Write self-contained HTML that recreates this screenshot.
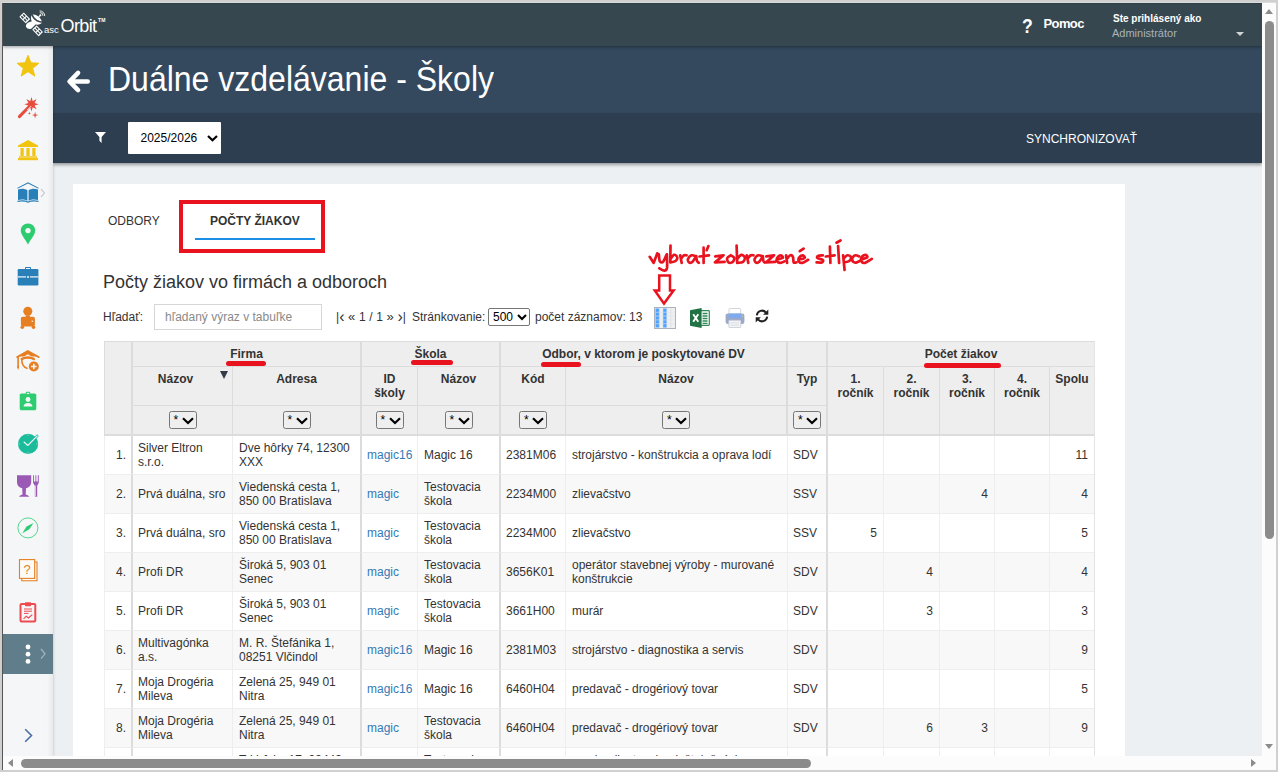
<!DOCTYPE html>
<html lang="sk">
<head>
<meta charset="utf-8">
<title>Duálne vzdelávanie - Školy</title>
<style>
*{box-sizing:border-box;}
html,body{margin:0;padding:0;width:1278px;height:772px;overflow:hidden;background:#d0d0d0;font-family:"Liberation Sans",sans-serif;}
#frame{position:absolute;left:0;top:0;width:1278px;height:772px;background:#d0d0d0;overflow:hidden;}
#darkl{position:absolute;left:2px;top:3px;width:1px;height:767px;background:#555;}
#view{position:absolute;left:3px;top:3px;width:1259px;height:753px;background:#ecf0f3;overflow:hidden;}
#vsb{position:absolute;left:1262px;top:3px;width:14px;height:767px;background:#fcfcfc;}
#hsb{position:absolute;left:3px;top:756px;width:1259px;height:14px;background:#fcfcfc;}
.thumb{position:absolute;background:#8b8b8b;border-radius:5px;}
.tri{position:absolute;width:0;height:0;}
/* coordinates inside #view are page coords minus 3 */
#topbar{position:absolute;left:0;top:0;width:1259px;height:43px;background:#37474f;border-top:1px solid #2e3f48;box-shadow:0 1px 3px rgba(0,0,0,.36);z-index:5;}
#sidebar{position:absolute;left:0;top:43px;width:50px;height:710px;background:linear-gradient(to right,#f5f6f8 0,#f5f6f8 44px,#ebecee 49px,#e6e7e9 50px);box-shadow:1px 0 2px rgba(0,0,0,.12);z-index:3;}
#titlebar{position:absolute;left:50px;top:43px;width:1209px;height:67px;background:#34495e;}
#filterbar{position:absolute;left:50px;top:110px;width:1209px;height:50px;background:#2c3e50;box-shadow:0 2px 3px rgba(0,0,0,.35);z-index:2;}
#panel{position:absolute;left:70px;top:181px;width:1052px;height:600px;background:#fff;}
.abs{position:absolute;white-space:nowrap;}
.ic{z-index:4;}
table.g{position:absolute;left:101px;top:338px;width:990px;border-collapse:separate;border-spacing:0;table-layout:fixed;font-size:12px;color:#333;border-right:1px solid #e4e4e4;}
table.g td,table.g th{border:0;border-left:1px solid #eee;border-bottom:1px solid #eee;padding:0;overflow:hidden;}
table.g th{background:#eeeeee;font-weight:bold;color:#333;text-align:center;vertical-align:top;line-height:14px;border-color:#dcdcdc;}
table.g tr.h1 th{border-top:1px solid #dcdcdc;}
table.g tr.h3 th,table.g th.hb{border-bottom:2px solid #dcdcdc;}
table.g td{height:39px;line-height:14px;padding:0 4px 1px 6px;vertical-align:middle;}
table.g tr.o td{background:#fff;}
table.g tr.e td{background:#f8f8f8;}
table.g th.bl,table.g td.bl{border-left:2px solid #dcdcdc;padding-left:5px;}
table.g th.bl{padding-left:0;}
table.g td.ty{border-left:0;position:relative;padding-left:7px;}
table.g td.ty::before{content:'';position:absolute;left:1px;top:0;bottom:0;width:1px;background:#eee;}
table.g td.n{text-align:right;padding-right:6px;}
table.g td.c0{text-align:right;padding:0 5px 1px 0;}
table.g a{color:#337ab7;text-decoration:none;}
.sel{display:inline-block;width:28px;height:18px;border:1px solid #767676;border-radius:2.500px;background:#efefef;position:relative;vertical-align:top;margin-top:5px;}
.sel i{position:absolute;left:4px;top:1px;font-style:normal;font-weight:normal;font-size:12px;line-height:14px;color:#000;}
.sel svg{position:absolute;left:12.200px;top:4.800px;}
.ul{position:absolute;height:5px;border-radius:2.500px;background:#e8131f;z-index:2;}
</style>
</head>
<body>
<div id="frame">
<div id="darkl"></div>
<div style="position:absolute;left:3px;top:2px;width:1273px;height:1px;background:#dcdcdc;"></div>
<div id="view">

<div id="topbar">
  <svg class="abs" style="left:15px;top:5.500px" width="28" height="28" viewBox="0 0 28 28">
    <g fill="#fff">
      <g transform="translate(6.75,7.95) rotate(45.4)"><rect x="-4.630" y="-3.080" width="9.260" height="6.160" rx=".5" fill="#fff"/><rect x="-3.53" y="-2.03" width="2.900" height="1.500" fill="#37474f"/><rect x="-3.53" y="0.52" width="2.900" height="1.500" fill="#37474f"/><rect x="0.42" y="-2.03" width="2.900" height="1.500" fill="#37474f"/><rect x="0.42" y="0.52" width="2.900" height="1.500" fill="#37474f"/></g>
      <g transform="translate(19.65,20.85) rotate(45.4)"><rect x="-4.630" y="-3.080" width="9.260" height="6.160" rx=".5" fill="#fff"/><rect x="-3.53" y="-2.03" width="2.900" height="1.500" fill="#37474f"/><rect x="-3.53" y="0.52" width="2.900" height="1.500" fill="#37474f"/><rect x="0.42" y="-2.03" width="2.900" height="1.500" fill="#37474f"/><rect x="0.42" y="0.52" width="2.900" height="1.500" fill="#37474f"/></g>
      <path d="M8.500 17.600C7 15.600 8.600 12.800 11.200 12.200L15.600 10.500L17.800 14.200L14.500 17.500C13 19.500 10 19.600 8.500 17.600z"/>
      <path d="M13.600 5.200C12.200 8.400 13.400 12.200 16.400 14C19.400 15.600 22.600 14.600 24 12.600C20 13 14.800 9.600 13.600 5.200z"/>
      <path d="M14.800 4.600C17.800 4 22.600 7.200 23.800 11.400C20.600 11.600 15.600 8.400 14.800 4.600z" fill="#fff"/>
    </g>
    <g stroke="#37474f" stroke-width=".8" fill="none">
      <path d="M14.600 5C16 8.800 20 11.600 23.800 11.800" stroke-width=".7"/>
    </g>
    <path d="M19 9L22.300 5.300" stroke="#fff" stroke-width="1.100"/>
    <circle cx="22.400" cy="5.200" r="1" fill="#fff"/>
    <g stroke="#fff" stroke-width=".9" fill="none" stroke-linecap="round">
      <path d="M22.200 2.600A2.700 2.700 0 0 1 25 5.400"/>
      <path d="M22 .9A4.500 4.500 0 0 1 26.700 5.600"/>
    </g>
  </svg>
  <div class="abs" style="left:41px;top:19.500px;font-size:9.500px;line-height:12px;color:#fff;letter-spacing:0;">asc</div>
  <div class="abs" style="left:57.500px;top:10.700px;font-size:18px;line-height:22px;color:#fff;letter-spacing:-.6px;">Orbit</div>
  <div class="abs" style="left:95px;top:13px;font-size:5px;line-height:6px;color:#fff;font-weight:bold;letter-spacing:.3px;">TM</div>
  <div class="abs" style="left:1019px;top:10.500px;font-size:20px;line-height:22px;font-weight:bold;color:#fff;transform:scaleX(.88);transform-origin:0 0;">?</div>
  <div class="abs" style="left:1040.500px;top:12px;font-size:13px;font-weight:bold;color:#fff;letter-spacing:-.6px;">Pomoc</div>
  <div class="abs" style="left:1110px;top:9px;font-size:10px;font-weight:bold;color:#fff;">Ste prihlásený ako</div>
  <div class="abs" style="left:1109px;top:23px;font-size:11px;color:#a9b4ba;">Administrátor</div>
  <div class="tri" style="left:1233px;top:28px;border-left:4px solid transparent;border-right:4px solid transparent;border-top:4px solid #cfd4d7;"></div>
</div>

<div id="sidebar">
  <div style="position:absolute;left:0;top:588px;width:50px;height:40px;background:#607d8b;"></div>
</div>

<!-- sidebar icons -->
<svg class="abs ic" style="left:13px;top:50.5px" width="24" height="24" viewBox="0 0 24 24"><polygon points="12.00,1.30 14.88,8.84 22.94,9.25 16.66,14.31 18.76,22.10 12.00,17.70 5.24,22.10 7.34,14.31 1.06,9.25 9.12,8.84" fill="#f1c40f" stroke="#f1c40f" stroke-width="1" stroke-linejoin="round"/></svg>
<svg class="abs ic" style="left:13px;top:93px" width="24" height="24" viewBox="0 0 24 24"><polygon points="15.50,1.00 16.76,5.15 20.59,3.11 18.55,6.94 22.70,8.20 18.55,9.46 20.59,13.29 16.76,11.25 15.50,15.40 14.24,11.25 10.41,13.29 12.45,9.46 8.30,8.20 12.45,6.94 10.41,3.11 14.24,5.15" fill="#e74c3c"/><path d="M3.400 20.600L14.500 9.200" stroke="#e74c3c" stroke-width="3" stroke-linecap="round"/><path d="M11.600 13.800L14.900 10.400" stroke="#f5f6f8" stroke-width="1" stroke-linecap="round"/><polygon points="19.10,15.80 19.81,18.39 22.40,19.10 19.81,19.81 19.10,22.40 18.39,19.81 15.80,19.10 18.39,18.39" fill="#e74c3c"/><polygon points="13.40,15.60 13.82,16.88 15.10,17.30 13.82,17.72 13.40,19.00 12.98,17.72 11.70,17.30 12.98,16.88" fill="#e74c3c"/></svg>
<svg class="abs ic" style="left:13px;top:135px" width="24" height="24" viewBox="0 0 24 24"><g fill="#f1c40f"><path d="M12 2L22 7.500V9H2V7.500z"/><rect x="4.500" y="10" width="3.200" height="8"/><rect x="10.400" y="10" width="3.200" height="8"/><rect x="16.300" y="10" width="3.200" height="8"/><rect x="3" y="18.300" width="18" height="1.400"/><rect x="2" y="20" width="20" height="2.200"/></g></svg>
<svg class="abs ic" style="left:13px;top:177px" width="24" height="24" viewBox="0 0 24 24"><g fill="#2980b9"><path d="M12 2.200L22.500 7.800V8.800L12 3.400L1.500 8.800V7.800z"/><path d="M2 9.500C5.500 8.300 8.800 8.600 11.400 10.300V20.800C8.800 19.300 5.500 19 2 20z"/><path d="M22 9.500C18.500 8.300 15.200 8.600 12.600 10.300V20.800C15.200 19.300 18.500 19 22 20z"/><path d="M1.500 20.800C5.500 19.800 8.800 20 12 21.600C15.200 20 18.500 19.800 22.500 20.800V22C18.500 21.100 15.200 21.300 12 22.800C8.800 21.300 5.500 21.100 1.500 22z"/></g></svg>
<svg class="abs ic" style="left:37.2px;top:185.3px" width="6" height="10" viewBox="0 0 6 10"><path d="M1 1L4.500 5L1 9" fill="none" stroke="#c9ced3" stroke-width="1.200"/></svg>
<svg class="abs ic" style="left:13px;top:219px" width="24" height="24" viewBox="0 0 24 24"><path d="M12 1.500C7.800 1.500 4.800 4.600 4.800 8.500C4.800 12.800 9 17 12 22.500C15 17 19.200 12.800 19.200 8.500C19.200 4.600 16.200 1.500 12 1.500z" fill="#2ecc71"/><circle cx="12" cy="8.600" r="2.700" fill="#f5f6f8"/></svg>
<svg class="abs ic" style="left:13px;top:261px" width="24" height="24" viewBox="0 0 24 24"><g fill="#2980b9"><path d="M9 5.500V4C9 3.300 9.400 3 10 3H14C14.600 3 15 3.300 15 4V5.500H14V4H10V5.500z"/><rect x="1.700" y="5" width="20.700" height="16.500" rx="1.200"/></g><rect x="1.700" y="12.300" width="20.700" height="1.200" fill="#f5f6f8"/><circle cx="12" cy="12.900" r="2.100" fill="#2980b9"/><circle cx="12" cy="12.900" r="1" fill="#f5f6f8"/></svg>
<svg class="abs ic" style="left:13px;top:303px" width="24" height="24" viewBox="0 0 24 24"><g fill="#e67e22"><circle cx="11.800" cy="5.300" r="4.500"/><rect x="9.600" y="9.400" width="4.400" height="2"/><rect x="4.900" y="10.700" width="14" height="9.700" rx="1.800"/><circle cx="6.300" cy="21.200" r="1.800"/><circle cx="17.500" cy="21.200" r="1.800"/></g><circle cx="16.300" cy="15.200" r=".8" fill="#f5f6f8"/></svg>
<svg class="abs ic" style="left:13px;top:345.5px" width="24" height="24" viewBox="0 0 24 24"><g fill="none" stroke="#e67e22" stroke-linecap="round" stroke-linejoin="round"><path d="M1.300 8L11.800 2L22.600 8" stroke-width="2"/><path d="M11.800 2.200L21 7.600H2.600z" fill="#e67e22" stroke="none"/><path d="M11.800 5.300L17.600 8.700H6z" fill="#f5f6f8" stroke="none"/><path d="M2.100 8.200V18" stroke-width="1.600"/><path d="M5.800 10C9 7.900 14.600 7.900 17.800 10" stroke-width="2.500"/><path d="M5.800 10.500C5.600 14.500 7.500 18.500 11 19.300" stroke-width="1.500"/></g><path d="M2.100 21L0.900 17.600H3.300z" fill="#e67e22"/><circle cx="17.800" cy="17.500" r="5" fill="#e67e22"/><path d="M17.800 14.700V20.300M15 17.500H20.600" stroke="#f5f6f8" stroke-width="1.600"/></svg>
<svg class="abs ic" style="left:13px;top:386px" width="24" height="24" viewBox="0 0 24 24"><path d="M9.800 4.400V3.600C9.800 3.100 10.200 2.800 10.600 2.800H13.400C13.800 2.800 14.200 3.100 14.200 3.600V4.400H18.500C19.600 4.400 20.300 5.100 20.300 6.200V19.400C20.300 20.500 19.600 21.200 18.500 21.200H5.500C4.400 21.200 3.700 20.500 3.700 19.400V6.200C3.700 5.100 4.400 4.400 5.500 4.400z" fill="#2ecc71"/><rect x="10.800" y="3.800" width="2.400" height="1.300" fill="#f5f6f8"/><circle cx="12" cy="10.500" r="2.400" fill="#f5f6f8"/><path d="M7.600 17.600C7.600 15.300 9.300 14 12 14C14.700 14 16.400 15.300 16.400 17.600z" fill="#f5f6f8"/></svg>
<svg class="abs ic" style="left:13px;top:429px" width="24" height="24" viewBox="0 0 24 24"><circle cx="12.100" cy="11.900" r="10.100" fill="#1abc9c"/><g stroke="#76d7c4" stroke-width="1"><path d="M12.100 2.300V4M12.100 19.800V21.500M2.500 11.900H4.200M20 11.900H21.700"/></g><path d="M8 10L11.800 13.500L21.200 3.900" fill="none" stroke="#1abc9c" stroke-width="2.600" stroke-linecap="round" stroke-linejoin="round"/><path d="M8 10L11.800 13.500L21.200 3.900" fill="none" stroke="#f5f6f8" stroke-width="1.100" stroke-linecap="round" stroke-linejoin="round"/></svg>
<svg class="abs ic" style="left:13px;top:471px" width="24" height="24" viewBox="0 0 24 24"><g fill="#9b59b6"><path d="M1 1.300H15.200V8.500C15.200 11.500 13 13.600 10 14.200L9.700 20.500C10.800 20.800 12.300 21.200 13.200 22.700H3C3.900 21.200 5.400 20.800 6.500 20.500L6.200 14.200C3.200 13.600 1 11.500 1 8.500z"/><path d="M17 1.300H17.900V7.500H19.400V1.300H20.300V7.500H21.800V1.300H22.800V8C22.800 10 21.300 10.800 21.200 12V22.700H18.900V12C18.800 10.800 17 10 17 8z"/></g><rect x="18.900" y="11.500" width="1.100" height="11.200" fill="#d7bde2"/></svg>
<svg class="abs ic" style="left:13px;top:512.7px" width="24" height="24" viewBox="0 0 24 24"><circle cx="11.900" cy="11.900" r="10" fill="none" stroke="#58d68d" stroke-width="1"/><path d="M17.500 7L13.300 13.300L6.300 17.300L10.500 10.600z" fill="#2ecc71"/></svg>
<svg class="abs ic" style="left:13px;top:555px" width="24" height="24" viewBox="0 0 24 24"><g fill="#fdfbf8" stroke="#e67e22" stroke-width="1.100"><path d="M5.800 4H21V22.700H5.800z"/><rect x="3.500" y="1.600" width="15.200" height="18.800"/></g><text x="11.100" y="15.600" font-family="Liberation Sans" font-size="13" fill="#e67e22" text-anchor="middle">?</text></svg>
<svg class="abs ic" style="left:13px;top:596.5px" width="24" height="24" viewBox="0 0 24 24"><rect x="4.500" y="4" width="14.800" height="17.600" rx="1" fill="#f5f6f8" stroke="#ee4b50" stroke-width="2"/><rect x="9" y="2.200" width="6" height="4" rx=".6" fill="#ee4b50"/><g stroke="#ee4b50" stroke-width="1" fill="none"><path d="M8 9H16M8 11.200H16M8 13.400H12.500"/><path d="M7.600 18.800L10.200 16.200L12.500 18L16.300 14.600" stroke-width="1.200"/></g></svg>
<svg class="abs ic" style="left:22px;top:640.5px" width="6" height="21" viewBox="0 0 6 21"><g fill="#fff"><circle cx="3" cy="3" r="2.400"/><circle cx="3" cy="10.200" r="2.400"/><circle cx="3" cy="17.400" r="2.400"/></g></svg>
<svg class="abs ic" style="left:36.5px;top:644.8px" width="7" height="12" viewBox="0 0 7 12"><path d="M1 1L5 5.800L1 10.600" fill="none" stroke="#9fb3bd" stroke-width="1.300"/></svg>
<svg class="abs ic" style="left:21px;top:724.9px" width="9" height="15" viewBox="0 0 9 15"><path d="M1.200 1.200L7.500 7.500L1.200 13.800" fill="none" stroke="#4a6fa5" stroke-width="1.600"/></svg>

<div id="titlebar">
  <svg class="abs" style="left:12px;top:22.500px" width="25" height="25" viewBox="0 0 22 22"><path d="M20 11H5M11.5 3.5L4 11l7.500 7.500" fill="none" stroke="#fff" stroke-width="4" stroke-linecap="round" stroke-linejoin="round"/></svg>
  <div class="abs" style="left:55px;top:14px;font-size:32px;color:#fff;line-height:40px;transform:scaleY(1.07);transform-origin:0 31px;">Duálne vzdelávanie - Školy</div>
</div>

<div id="filterbar">
  <svg class="abs" style="left:42.300px;top:19px" width="11" height="11" viewBox="0 0 10 10"><path d="M0 0h10L6 4.500V10L4 8V4.500z" fill="#fff"/></svg>
  <div class="abs" style="left:75px;top:9px;width:93px;height:32px;background:#fff;border-radius:1px;"></div>
  <div class="abs" style="left:87.500px;top:18px;font-size:12px;color:#000;">2025/2026</div>
  <svg class="abs" style="left:153.500px;top:21.500px" width="11" height="7" viewBox="0 0 11 7"><path d="M1 1L5.500 5.300L10 1" fill="none" stroke="#000" stroke-width="2.200"/></svg>
  <div class="abs" style="left:973px;top:19px;font-size:12px;color:#fff;">SYNCHRONIZOVAŤ</div>
</div>

<div id="panel"></div>

<!-- tabs -->
<div class="abs" style="left:105px;top:211px;font-size:12px;color:#333;">ODBORY</div>
<div class="abs" style="left:207px;top:211px;font-size:12px;color:#333;font-weight:bold;">POČTY ŽIAKOV</div>
<div class="abs" style="left:192px;top:235px;width:120px;height:2px;background:#1a8fe3;"></div>
<div class="abs" style="left:176px;top:197px;width:146px;height:53px;border:4.500px solid #e8131f;"></div>

<div class="abs" style="left:100px;top:268px;font-size:18px;color:#333;line-height:22px;">Počty žiakov vo firmách a odboroch</div>

<!-- toolbar -->
<div class="abs" style="left:100px;top:307px;font-size:12px;color:#333;">Hľadať:</div>
<div class="abs" style="left:151px;top:301px;width:168px;height:26px;border:1px solid #d6d6d6;background:#fff;"></div>
<div class="abs" style="left:162px;top:307px;font-size:12px;color:#8a8a8a;">hľadaný výraz v tabuľke</div>
<div class="abs" style="left:333px;top:307px;font-size:12px;color:#333;word-spacing:.3px;line-height:14px;">|<span style="font-size:16px;line-height:0;position:relative;top:1px">‹</span> <span style="font-size:13px;line-height:0">«</span> 1 / 1 <span style="font-size:13px;line-height:0">»</span> <span style="font-size:16px;line-height:0;position:relative;top:1px">›</span>|</div>
<div class="abs" style="left:409px;top:307px;font-size:12px;color:#333;">Stránkovanie:</div>
<div class="abs" style="left:485px;top:305px;width:42px;height:18px;border:1px solid #767676;border-radius:2px;background:#fff;"></div>
<div class="abs" style="left:490px;top:307px;font-size:12px;color:#000;">500</div>
<svg class="abs" style="left:514px;top:310.500px" width="10" height="7" viewBox="0 0 10 7"><path d="M1 1L5 5L9 1" fill="none" stroke="#000" stroke-width="2.100"/></svg>
<div class="abs" style="left:532px;top:307px;font-size:12px;color:#333;">počet záznamov: 13</div>

<svg class="abs" style="left:637px;top:233px" width="240" height="40" viewBox="0 0 240 40"><path d="M9.7 20.8L13.7 26.9L17.3 17.3M18.8 18.3C19.0 19.4 19.1 24.0 19.8 25.2C20.6 26.4 22.1 26.8 23.2 25.6C24.3 24.4 26.1 19.5 26.7 18.3M26.9 18.3C26.9 20.6 27.4 29.3 27.0 32.0C26.5 34.7 25.5 34.5 24.2 34.6C22.9 34.6 20.1 32.7 19.3 32.3M30.5 9.6L30.3 26.4M30.5 22.9C31.1 22.2 33.0 19.1 34.1 18.8C35.2 18.5 37.0 20.1 37.2 21.1C37.5 22.2 36.7 24.1 35.6 25.0C34.5 25.9 31.4 26.2 30.5 26.4M40.2 19.3L41.7 26.9M40.9 22.9C41.4 22.3 42.8 20.1 43.7 19.5C44.7 18.9 46.1 19.3 46.6 19.3M55.7 20.3C55.1 20.1 53.0 18.9 51.7 19.3C50.4 19.7 48.5 21.7 48.0 22.9C47.6 24.0 48.3 25.9 49.0 26.4C49.8 26.9 51.3 26.9 52.5 25.8C53.7 24.8 55.5 21.1 56.2 20.1M56.2 20.1C56.3 20.9 56.5 23.8 57.0 24.9C57.4 26.0 58.5 26.6 58.8 26.9M63.6 11.7L63.6 26.9M59.5 20.5L69.0 19.3M68.4 10.1L66.7 14.2M75.3 20.3L83.6 19.3L75.0 26.4L84.6 25.9M90.7 19.3C90.1 19.8 87.6 21.0 87.2 22.1C86.8 23.3 87.6 25.8 88.5 26.4C89.4 27.1 91.6 26.8 92.6 26.0C93.5 25.3 94.5 23.1 94.2 21.9C93.9 20.8 91.3 19.7 90.7 19.3M96.6 9.6L97.2 26.9M97.2 23.1C97.8 22.4 99.9 19.2 101.2 18.9C102.5 18.6 104.5 20.2 104.8 21.3C105.1 22.5 104.2 24.9 103.0 25.8C101.7 26.7 98.3 26.7 97.4 26.9M106.8 19.3L108.3 26.9M107.5 22.9C108.0 22.3 109.5 20.1 110.5 19.5C111.5 18.9 113.0 19.3 113.5 19.3M122.4 20.3C121.7 20.1 119.6 18.9 118.3 19.3C117.1 19.7 115.1 21.7 114.7 22.9C114.2 24.0 115.0 25.9 115.7 26.4C116.4 26.9 118.0 26.9 119.2 25.8C120.3 24.8 122.2 21.1 122.8 20.1M122.8 20.1C122.9 20.9 123.1 23.8 123.4 24.9C123.8 26.0 124.5 26.3 124.8 26.6M126.3 20.3L134.1 19.3L126.0 26.4L135.1 25.9M137.0 23.6C137.9 23.3 142.1 22.5 142.8 21.8C143.4 21.1 141.6 19.3 140.7 19.3C139.8 19.3 137.9 20.7 137.3 21.7C136.7 22.8 136.5 24.5 137.1 25.4C137.6 26.3 139.3 26.9 140.5 26.9C141.7 26.9 143.7 25.7 144.3 25.4M146.1 19.3L147.1 26.9M146.6 23.2C147.2 22.5 149.2 19.7 150.3 19.3C151.3 18.9 152.4 19.7 152.9 20.9C153.5 22.1 153.2 25.5 153.7 26.4C154.3 27.3 155.9 26.4 156.4 26.4M158.8 23.6C159.8 23.3 164.0 22.5 164.6 21.8C165.3 21.1 163.5 19.3 162.6 19.3C161.7 19.3 159.6 20.7 159.0 21.7C158.4 22.8 158.4 24.5 158.9 25.4C159.5 26.3 160.8 27.2 162.4 26.9C163.9 26.7 167.2 24.3 168.2 23.8M159.8 15.2L163.6 12.6M182.8 19.3C182.1 19.4 179.3 19.4 178.4 19.8C177.4 20.2 176.6 21.2 177.3 21.9C178.1 22.6 182.1 23.2 182.8 24.0C183.6 24.7 182.9 26.0 181.8 26.4C180.8 26.8 177.5 26.4 176.6 26.4M189.9 10.6L190.4 26.9M185.8 20.5L194.6 19.3M198.1 10.1L199.1 26.9M196.5 6.7L200.5 4.5M203.1 19.3L204.6 34.0M203.7 22.7C204.3 22.1 206.1 19.6 207.3 19.3C208.4 19.0 210.5 20.0 210.8 20.9C211.2 21.9 210.4 24.1 209.3 25.0C208.2 25.9 205.0 26.2 204.2 26.4M219.1 20.4C218.4 20.2 216.5 19.0 215.4 19.3C214.3 19.6 212.7 21.2 212.3 22.3C212.0 23.4 212.6 25.2 213.4 25.9C214.1 26.6 215.8 26.6 216.8 26.4C217.9 26.2 219.1 25.1 219.6 24.9M220.9 23.6C221.9 23.2 226.5 22.1 227.2 21.3C227.9 20.5 226.1 18.8 225.2 18.8C224.2 18.8 222.2 20.2 221.6 21.3C221.0 22.4 220.9 24.5 221.5 25.4C222.1 26.3 223.2 27.3 225.0 26.9C226.7 26.5 230.6 23.5 231.8 22.9" fill="none" stroke="#e8131f" stroke-width="2.700" stroke-linecap="round" stroke-linejoin="round"/></svg>
<svg class="abs" style="left:647px;top:270px" width="30" height="36" viewBox="650 273 30 36"><path d="M659.200 275.500H670V290.500H673.600L664 303.600L654.800 290.500H659.200z" fill="none" stroke="#e8131f" stroke-width="2.500" stroke-linejoin="miter"/></svg>
<svg class="abs" style="left:651px;top:304px" width="22" height="22" viewBox="0 0 22 22"><rect x=".5" y=".5" width="21" height="21" fill="#eef0f2" stroke="#aab3bd"/><rect x="1.500" y="1.500" width="3.800" height="19" fill="#4da3ff"/><rect x="9" y="1.500" width="3.800" height="19" fill="#4da3ff"/><g stroke="#d5d9de" stroke-width=".6"><path d="M5.300 1.500V20.500M9 1.500V20.500M12.800 1.500V20.500M16.800 1.500V20.500"/><path d="M1.500 5.300H20.500M1.500 9.100H20.500M1.500 12.900H20.500M1.500 16.700H20.500" stroke="#dfe3e7"/></g><g stroke="#8cc5ff" stroke-width=".45"><path d="M1.500 5.300H5.300M1.500 9.100H5.300M1.500 12.900H5.300M1.500 16.700H5.300M9 5.300H12.800M9 9.100H12.800M9 12.900H12.800M9 16.700H12.800"/></g></svg>
<svg class="abs" style="left:687px;top:305px" width="20" height="20" viewBox="0 0 20 20"><rect x="10" y="2.700" width="9.300" height="14.600" rx=".8" fill="#fff" stroke="#2e8b57" stroke-width="1.200"/><g stroke="#2e8b57" stroke-width="1.300"><path d="M12.500 5.500H17.500M12.500 8H17.500M12.500 10.500H17.500M12.500 13H17.500M12.500 15.300H17.500"/></g><path d="M0 2.300L11.600 0V20L0 17.700z" fill="#217346"/><path d="M3.200 6.200L8.300 13.800M8.300 6.200L3.200 13.800" stroke="#fff" stroke-width="1.900"/></svg>
<svg class="abs" style="left:722px;top:305px" width="20" height="20" viewBox="0 0 20 20"><rect x="4" y=".5" width="11.600" height="7" rx=".8" fill="#fff" stroke="#c5cad3" stroke-width=".8"/><rect x=".6" y="5.600" width="18.800" height="10.400" rx="2.200" fill="#9aa9c7"/><rect x="3.600" y="5.600" width="12.400" height="4.300" fill="#7eaaf0"/><rect x="3.800" y="12.300" width="12" height="7.200" rx=".6" fill="#f4f5f7" stroke="#c5cad3" stroke-width=".8"/><g stroke="#d5d8de" stroke-width=".6"><path d="M5.500 14.500H14M5.500 16H14M5.500 17.500H14"/></g><circle cx="17.300" cy="7.800" r=".6" fill="#e9d58a"/></svg>
<svg class="abs" style="left:752px;top:305.500px" width="14" height="14" viewBox="0 0 14 14"><g fill="none" stroke="#222" stroke-width="2"><path d="M1.800 6.300A5.200 5.200 0 0 1 11 3.600"/><path d="M12.200 7.700A5.200 5.200 0 0 1 3 10.400"/></g><path d="M13.300 .6V5.800H8.100z" fill="#222"/><path d="M.7 13.400V8.200H5.900z" fill="#222"/></svg>

<!-- table -->
<table class="g">
<colgroup>
<col style="width:27px"><col style="width:101px"><col style="width:128px"><col style="width:57px"><col style="width:82px"><col style="width:66px"><col style="width:221px"><col style="width:40px"><col style="width:57px"><col style="width:56px"><col style="width:55px"><col style="width:55px"><col style="width:45px">
</colgroup>
<tr class="h1" style="height:26px">
 <th rowspan="3" class="hb"></th>
 <th colspan="2" class="bl" style="padding-top:5px">Firma</th>
 <th colspan="2" class="bl" style="padding-top:5px">Škola</th>
 <th colspan="2" class="bl" style="padding-top:5px">Odbor, v ktorom je poskytované DV</th>
 <th class="bl"></th>
 <th colspan="5" class="bl" style="padding-top:5px">Počet žiakov</th>
</tr>
<tr class="h2" style="height:39px">
 <th class="bl" style="padding-top:5px;padding-right:14px;position:relative">Názov<span style="position:absolute;left:87px;top:4px;width:0;height:0;border-left:4.500px solid transparent;border-right:4.500px solid transparent;border-top:8.500px solid #333c48;"></span></th>
 <th style="padding-top:5px">Adresa</th>
 <th class="bl" style="padding-top:5px">ID<br>školy</th>
 <th style="padding-top:5px">Názov</th>
 <th class="bl" style="padding-top:5px">Kód</th>
 <th style="padding-top:5px">Názov</th>
 <th class="bl" style="padding-top:5px">Typ</th>
 <th rowspan="2" class="bl hb" style="padding-top:5px">1.<br>ročník</th>
 <th rowspan="2" class="hb" style="padding-top:5px">2.<br>ročník</th>
 <th rowspan="2" class="hb" style="padding-top:5px">3.<br>ročník</th>
 <th rowspan="2" class="hb" style="padding-top:5px">4.<br>ročník</th>
 <th rowspan="2" class="hb" style="padding-top:5px">Spolu</th>
</tr>
<tr class="h3" style="height:30px">
 <th class="bl"><span class="sel"><i>*</i><svg width="12" height="8" viewBox="0 0 12 8"><path d="M1 1.200L6 6L11 1.200" fill="none" stroke="#000" stroke-width="2.200"/></svg></span></th>
 <th><span class="sel"><i>*</i><svg width="12" height="8" viewBox="0 0 12 8"><path d="M1 1.200L6 6L11 1.200" fill="none" stroke="#000" stroke-width="2.200"/></svg></span></th>
 <th class="bl"><span class="sel"><i>*</i><svg width="12" height="8" viewBox="0 0 12 8"><path d="M1 1.200L6 6L11 1.200" fill="none" stroke="#000" stroke-width="2.200"/></svg></span></th>
 <th><span class="sel"><i>*</i><svg width="12" height="8" viewBox="0 0 12 8"><path d="M1 1.200L6 6L11 1.200" fill="none" stroke="#000" stroke-width="2.200"/></svg></span></th>
 <th class="bl"><span class="sel"><i>*</i><svg width="12" height="8" viewBox="0 0 12 8"><path d="M1 1.200L6 6L11 1.200" fill="none" stroke="#000" stroke-width="2.200"/></svg></span></th>
 <th><span class="sel"><i>*</i><svg width="12" height="8" viewBox="0 0 12 8"><path d="M1 1.200L6 6L11 1.200" fill="none" stroke="#000" stroke-width="2.200"/></svg></span></th>
 <th class="bl"><span class="sel"><i>*</i><svg width="12" height="8" viewBox="0 0 12 8"><path d="M1 1.200L6 6L11 1.200" fill="none" stroke="#000" stroke-width="2.200"/></svg></span></th>
</tr>
<tr class="o"><td class="c0">1.</td><td class="bl">Silver Eltron s.r.o.</td><td>Dve hôrky 74, 12300 XXX</td><td class="bl"><a>magic16</a></td><td>Magic 16</td><td class="bl">2381M06</td><td>strojárstvo - konštrukcia a oprava lodí</td><td class="ty">SDV</td><td class="bl n"></td><td class="n"></td><td class="n"></td><td class="n"></td><td class="n">11</td></tr>
<tr class="e"><td class="c0">2.</td><td class="bl">Prvá duálna, sro</td><td>Viedenská cesta 1, 850 00 Bratislava</td><td class="bl"><a>magic</a></td><td>Testovacia škola</td><td class="bl">2234M00</td><td>zlievačstvo</td><td class="ty">SSV</td><td class="bl n"></td><td class="n"></td><td class="n">4</td><td class="n"></td><td class="n">4</td></tr>
<tr class="o"><td class="c0">3.</td><td class="bl">Prvá duálna, sro</td><td>Viedenská cesta 1, 850 00 Bratislava</td><td class="bl"><a>magic</a></td><td>Testovacia škola</td><td class="bl">2234M00</td><td>zlievačstvo</td><td class="ty">SSV</td><td class="bl n">5</td><td class="n"></td><td class="n"></td><td class="n"></td><td class="n">5</td></tr>
<tr class="e"><td class="c0">4.</td><td class="bl">Profi DR</td><td>Široká 5, 903 01 Senec</td><td class="bl"><a>magic</a></td><td>Testovacia škola</td><td class="bl">3656K01</td><td>operátor stavebnej výroby - murované konštrukcie</td><td class="ty">SDV</td><td class="bl n"></td><td class="n">4</td><td class="n"></td><td class="n"></td><td class="n">4</td></tr>
<tr class="o"><td class="c0">5.</td><td class="bl">Profi DR</td><td>Široká 5, 903 01 Senec</td><td class="bl"><a>magic</a></td><td>Testovacia škola</td><td class="bl">3661H00</td><td>murár</td><td class="ty">SDV</td><td class="bl n"></td><td class="n">3</td><td class="n"></td><td class="n"></td><td class="n">3</td></tr>
<tr class="e"><td class="c0">6.</td><td class="bl">Multivagónka a.s.</td><td>M. R. Štefánika 1, 08251 Vlčindol</td><td class="bl"><a>magic16</a></td><td>Magic 16</td><td class="bl">2381M03</td><td>strojárstvo - diagnostika a servis</td><td class="ty">SDV</td><td class="bl n"></td><td class="n"></td><td class="n"></td><td class="n"></td><td class="n">9</td></tr>
<tr class="o"><td class="c0">7.</td><td class="bl">Moja Drogéria Mileva</td><td>Zelená 25, 949 01 Nitra</td><td class="bl"><a>magic16</a></td><td>Magic 16</td><td class="bl">6460H04</td><td>predavač - drogériový tovar</td><td class="ty">SDV</td><td class="bl n"></td><td class="n"></td><td class="n"></td><td class="n"></td><td class="n">5</td></tr>
<tr class="e"><td class="c0">8.</td><td class="bl">Moja Drogéria Mileva</td><td>Zelená 25, 949 01 Nitra</td><td class="bl"><a>magic</a></td><td>Testovacia škola</td><td class="bl">6460H04</td><td>predavač - drogériový tovar</td><td class="ty">SDV</td><td class="bl n"></td><td class="n">6</td><td class="n">3</td><td class="n"></td><td class="n">9</td></tr>
<tr class="o"><td class="c0">9.</td><td class="bl">Tehelňa Martin</td><td>Tri hôrky 17, 03443 Hrabovo</td><td class="bl"><a>magic</a></td><td>Testovacia škola</td><td class="bl">3658K00</td><td>mechanik stavebnoinštalačných zariadení</td><td class="ty">SDV</td><td class="bl n"></td><td class="n"></td><td class="n"></td><td class="n"></td><td class="n">2</td></tr>
</table>

<!-- red annotation underlines -->
<div class="ul" style="left:223px;top:358px;width:40px;"></div>
<div class="ul" style="left:408px;top:357px;width:42px;"></div>
<div class="ul" style="left:538px;top:358.500px;width:40px;"></div>
<div class="ul" style="left:921px;top:360px;width:77px;"></div>

</div><!-- view -->

<div id="vsb">
  <div class="tri" style="left:3px;top:6px;border-left:4.500px solid transparent;border-right:4.500px solid transparent;border-bottom:5px solid #8b8b8b;"></div>
  <div class="thumb" style="left:3px;top:18px;width:9px;height:518px;"></div>
  <div class="tri" style="left:3px;top:741px;border-left:4.500px solid transparent;border-right:4.500px solid transparent;border-top:5px solid #8b8b8b;"></div>
</div>
<div id="hsb">
  <div class="tri" style="left:5px;top:3px;border-top:4.500px solid transparent;border-bottom:4.500px solid transparent;border-right:5px solid #8b8b8b;"></div>
  <div class="thumb" style="left:18px;top:3px;width:790px;height:9px;"></div>
  <div class="tri" style="left:1248px;top:3px;border-top:4.500px solid transparent;border-bottom:4.500px solid transparent;border-left:5px solid #8b8b8b;"></div>
</div>
</div>
</body>
</html>
